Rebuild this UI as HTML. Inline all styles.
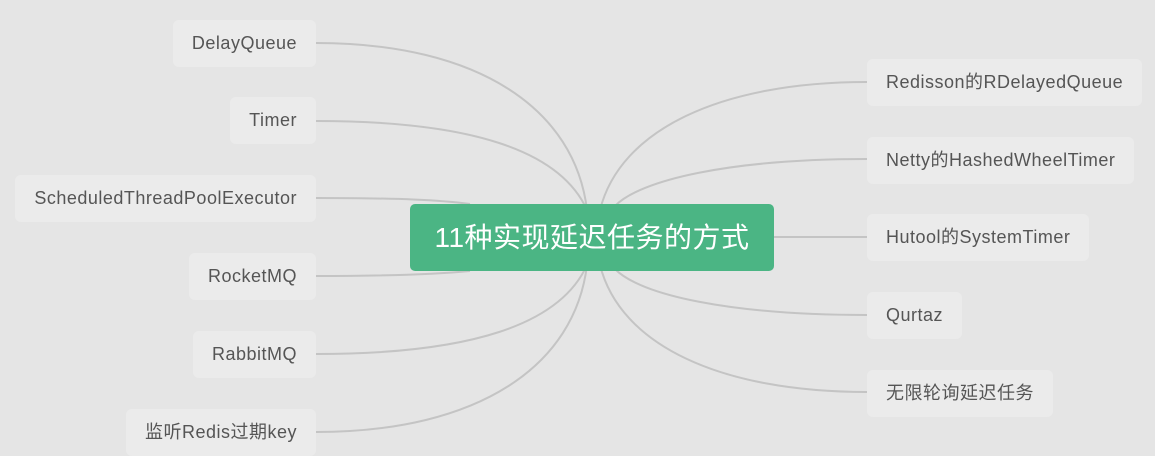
<!DOCTYPE html>
<html><head><meta charset="utf-8"><style>
body{margin:0;width:1155px;height:450px;background:#e5e5e5;overflow:hidden;position:relative;font-family:"Liberation Sans","Noto Sans CJK SC",sans-serif}
.b{position:absolute;height:47px;line-height:47px;background:#ebebeb;border-radius:6px;color:#555;font-size:18px;letter-spacing:0.5px;box-sizing:border-box;padding:0 19px;white-space:nowrap}
.l{right:839px;text-align:right}
.r{left:867px}
.c{position:absolute;left:410px;top:204px;width:364px;height:67px;background:#4bb584;border-radius:5px;color:#fff;font-size:28px;letter-spacing:0.5px;line-height:67px;text-align:center}
svg{position:absolute;left:0;top:0}
</style></head><body>
<svg width="1155" height="450" fill="none" stroke="#c4c4c4" stroke-width="2">
<path d="M316 43 C480 43 575 110 587 210"/>
<path d="M316 121 C470 121 560 150 587 210"/>
<path d="M316 198 C400 198 440 200 470 204"/>
<path d="M316 276 C400 276 440 274 470 271"/>
<path d="M316 354 C470 354 560 325 587 265"/>
<path d="M316 432 C480 432 575 365 587 265"/>
<path d="M867 82 C720 82 620 130 600 210"/>
<path d="M867 159 C730 159 640 180 615 206"/>
<path d="M774 237 L867 237"/>
<path d="M867 315 C730 315 640 295 615 269"/>
<path d="M867 392 C720 392 620 345 600 265"/>
</svg>
<div class="b l" style="top:20px">DelayQueue</div>
<div class="b l" style="top:97px">Timer</div>
<div class="b l" style="top:175px">ScheduledThreadPoolExecutor</div>
<div class="b l" style="top:253px">RocketMQ</div>
<div class="b l" style="top:331px">RabbitMQ</div>
<div class="b l" style="top:409px">监听Redis过期key</div>
<div class="b r" style="top:59px">Redisson的RDelayedQueue</div>
<div class="b r" style="top:137px">Netty的HashedWheelTimer</div>
<div class="b r" style="top:214px">Hutool的SystemTimer</div>
<div class="b r" style="top:292px">Qurtaz</div>
<div class="b r" style="top:370px">无限轮询延迟任务</div>
<div class="c">11种实现延迟任务的方式</div>
</body></html>
